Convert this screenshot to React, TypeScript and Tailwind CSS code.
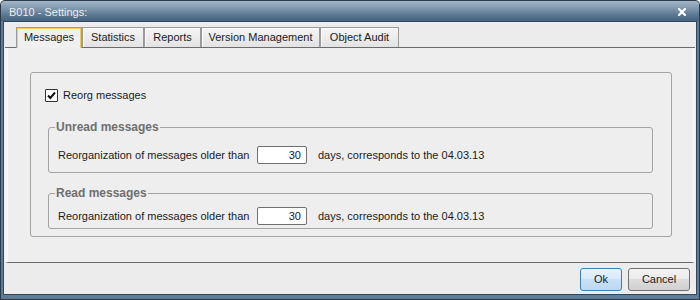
import React from "react";

type Tab = { label: string; width: string; active?: boolean };

const tabs: Tab[] = [
  { label: "Messages", width: "w-[66px]", active: true },
  { label: "Statistics", width: "w-[62px]" },
  { label: "Reports", width: "w-[57px]" },
  { label: "Version Management", width: "w-[119px]" },
  { label: "Object Audit", width: "w-[79px]" },
];

function CloseIcon() {
  return (
    <svg width="8" height="8" viewBox="0 0 8 8">
      <path d="M1 1L7 7M7 1L1 7" stroke="#ffffff" strokeWidth="2.2" strokeLinecap="square" />
    </svg>
  );
}

function CheckBox() {
  return (
    <span className="flex h-[13px] w-[13px] items-center justify-center rounded-[1px] border border-[#333333] bg-white">
      <svg width="11" height="11" viewBox="0 0 11 11">
        <path d="M2 5.5L4.3 8L9 2.5" fill="none" stroke="#111111" strokeWidth="2" />
      </svg>
    </span>
  );
}

function DaysGroup({ title, className }: { title: string; className: string }) {
  return (
    <fieldset className={`ml-[3px] mr-[4px] rounded-[3px] border border-[#a3a3a3] px-[9px] ${className}`}>
      <legend className="-ml-[3px] px-px text-[12px] font-bold leading-[14px] text-[#6f6f6f]">{title}</legend>
      <div className="flex h-[18px] items-center">
        <span className="w-[199px] whitespace-nowrap">Reorganization of messages older than</span>
        <input
          readOnly
          value="30"
          className="h-[18px] w-[50px] rounded-[2px] border border-[#707070] bg-white pr-[5px] text-right text-[11px] outline-none"
        />
        <span className="ml-[11px] whitespace-nowrap">days, corresponds to the 04.03.13</span>
      </div>
    </fieldset>
  );
}

export default function App() {
  return (
    <div className="h-[300px] w-[700px] rounded-t-[5px] bg-[#2b3b4b] p-px text-[11px] text-[#1b1b1b] [font-family:'Liberation_Sans',Arial,sans-serif]">
      <div className="flex h-full flex-col rounded-t-[4px] bg-[#5f7b95]">
        {/* title bar */}
        <div className="flex h-[20px] items-center justify-between rounded-t-[4px] bg-[linear-gradient(to_bottom,#a4b7c8,#819aaf_35%,#5b7892_70%,#44627d)] pl-[8px] pr-[13px] pt-[2px]">
          <span className="text-[11px] text-[#ededed]">B010 - Settings:</span>
          <CloseIcon />
        </div>

        <div className="flex flex-1 flex-col px-[2px] pb-[4px]">
          <div className="flex flex-1 flex-col border border-[#34475a] bg-[#ececec]">
            {/* tabs */}
            <div className="mx-px flex h-[26px] items-end border-b border-[#6c6c6c] pl-[11px]">
              {tabs.map((t) =>
                t.active ? (
                  <div
                    key={t.label}
                    className={`relative -mb-px flex h-[21px] items-center justify-center border border-b-0 border-[#9c9c9c] bg-[#f0f0f0] pb-[2px] shadow-[inset_1px_1px_0_#f3cd5f,inset_-1px_0_0_#f3cd5f] ${t.width}`}
                  >
                    {t.label}
                  </div>
                ) : (
                  <div
                    key={t.label}
                    className={`flex h-[20px] items-center justify-center border border-b-0 border-[#9a9a9a] bg-[linear-gradient(#f5f5f5,#e3e3e3)] shadow-[inset_1px_1px_0_#fbfbfb] ${t.width}`}
                  >
                    {t.label}
                  </div>
                )
              )}
            </div>

            {/* panel */}
            <div className="mx-px h-[215px] border-x-[3px] border-b border-[#6c6c6c] border-l-[#f6f6f6] border-r-[#f4f4f4] bg-[#eeeeee] pt-[24px]">
              <div className="ml-[22px] w-[642px] rounded-[3px] border border-[#a3a3a3] px-[14px] pb-[7px] pt-[16px]">
                <label className="flex h-[13px] items-center gap-[5px]">
                  <CheckBox />
                  <span>Reorg messages</span>
                </label>
                <DaysGroup title="Unread messages" className="mt-[18px] pb-[8px] pt-[12px]" />
                <DaysGroup title="Read messages" className="mt-[13px] pb-[3px] pt-[7px]" />
              </div>
            </div>

            {/* buttons */}
            <div className="flex flex-1 items-start justify-end gap-[6px] pr-[6px] pt-[5px]">
              <button className="h-[23px] w-[42px] rounded-[3px] border border-[#3c7fb1] bg-[linear-gradient(#e8f3fc,#d8eaf9_50%,#c9e1f6_50%,#bcd8f2)] text-[11px]">
                Ok
              </button>
              <button className="h-[23px] w-[62px] rounded-[3px] border border-[#707070] bg-[linear-gradient(#f3f3f3,#ebebeb_50%,#dddddd_50%,#d0d0d0)] text-[11px]">
                Cancel
              </button>
            </div>
          </div>
        </div>
      </div>
    </div>
  );
}
